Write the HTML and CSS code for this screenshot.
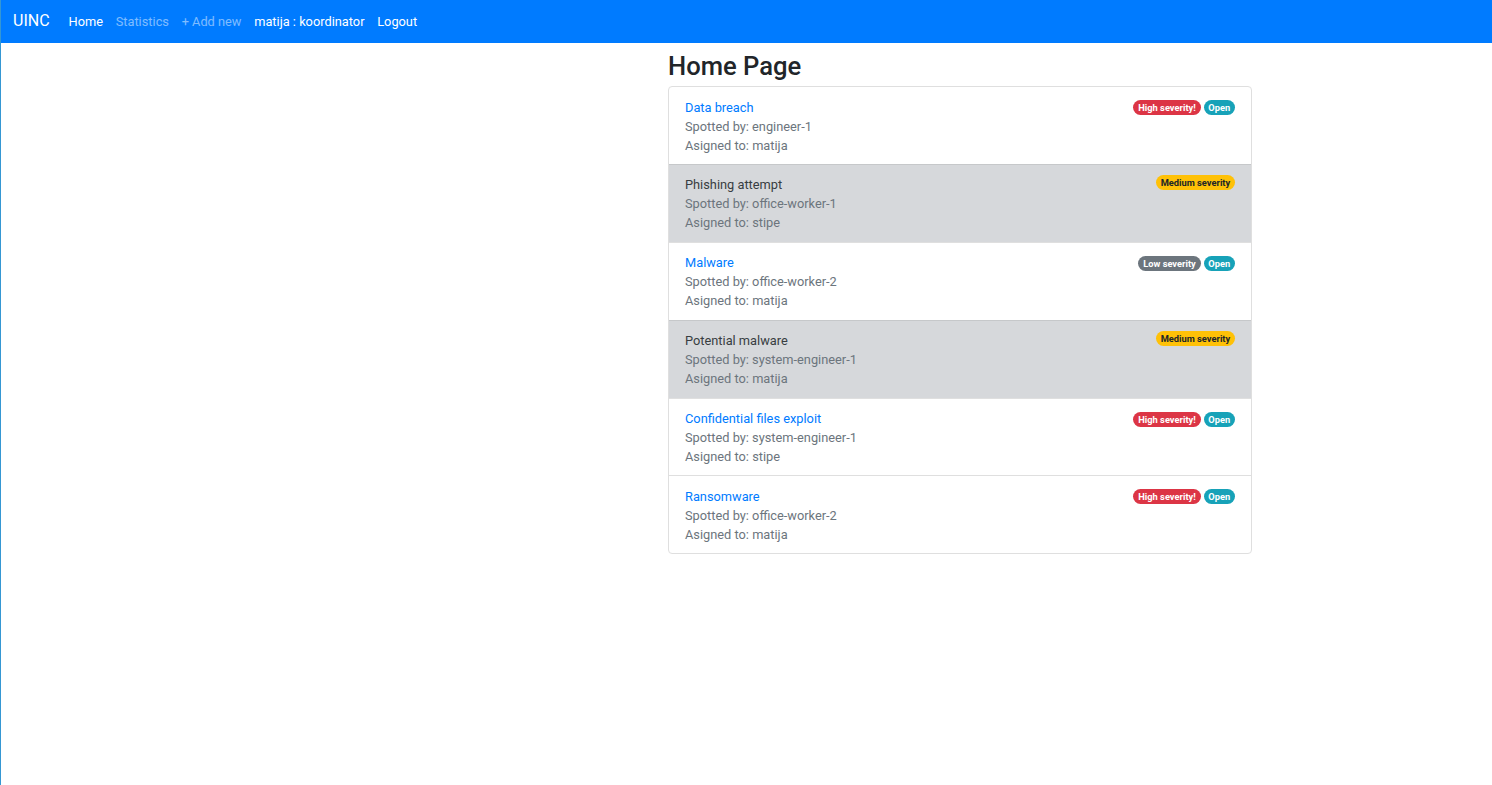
FILE: index.html
```html
<!DOCTYPE html>
<html>
<head>
<meta charset="utf-8">
<link rel="stylesheet" href="styles.css">
</head>
<body>
<nav class="navbar">
  <a class="brand">UINC</a>
  <a class="nav-link active">Home</a>
  <a class="nav-link muted">Statistics</a>
  <a class="nav-link muted">+ Add new</a>
  <a class="nav-link active">matija : koordinator</a>
  <a class="nav-link active">Logout</a>
</nav>
<main class="layout">
  <div class="spacer"></div>
  <section class="content">
    <h1 class="title">Home Page</h1>
    <ul class="list">
      <li class="item">
        <div class="info"><a class="name link">Data breach</a><div class="meta">Spotted by: engineer-1</div><div class="meta">Asigned to: matija</div></div>
        <div class="badges"><span class="badge danger">High severity!</span><span class="badge info-b">Open</span></div>
      </li>
      <li class="item grey">
        <div class="info"><span class="name">Phishing attempt</span><div class="meta">Spotted by: office-worker-1</div><div class="meta">Asigned to: stipe</div></div>
        <div class="badges"><span class="badge warning">Medium severity</span></div>
      </li>
      <li class="item">
        <div class="info"><a class="name link">Malware</a><div class="meta">Spotted by: office-worker-2</div><div class="meta">Asigned to: matija</div></div>
        <div class="badges"><span class="badge secondary">Low severity</span><span class="badge info-b">Open</span></div>
      </li>
      <li class="item grey">
        <div class="info"><span class="name">Potential malware</span><div class="meta">Spotted by: system-engineer-1</div><div class="meta">Asigned to: matija</div></div>
        <div class="badges"><span class="badge warning">Medium severity</span></div>
      </li>
      <li class="item short">
        <div class="info"><a class="name link">Confidential files exploit</a><div class="meta">Spotted by: system-engineer-1</div><div class="meta">Asigned to: stipe</div></div>
        <div class="badges"><span class="badge danger">High severity!</span><span class="badge info-b">Open</span></div>
      </li>
      <li class="item last">
        <div class="info"><a class="name link">Ransomware</a><div class="meta">Spotted by: office-worker-2</div><div class="meta">Asigned to: matija</div></div>
        <div class="badges"><span class="badge danger">High severity!</span><span class="badge info-b">Open</span></div>
      </li>
    </ul>
  </section>
</main>
</body>
</html>
```
FILE: styles.css
```css
html, body { margin: 0; padding: 0; }
body {
  font-family: Roboto, "Liberation Sans", sans-serif;
  font-size: 12.8px;
  color: #212529;
  background: #fff;
  border-left: 1px solid #3597d3;
  min-height: 785px;
  box-sizing: border-box;
}
.navbar {
  background: #007bff;
  height: 43px;
  display: flex;
  align-items: center;
  padding-left: 12px;
  box-sizing: border-box;
}
.brand {
  color: #fff;
  font-size: 16px;
  margin-right: 19px;
  padding-bottom: 2px;
}
.nav-link {
  font-size: 12.8px;
  margin-right: 12.7px;
  padding-bottom: 1px;
}
.nav-link.active { color: #fff; }
.nav-link.muted { color: rgba(255,255,255,0.5); }
.layout { display: flex; }
.spacer { width: 667px; flex: none; }
.content { width: 584px; }
.title {
  font-size: 25.6px;
  font-weight: 500;
  margin: 8px 0 4px;
  line-height: 31px;
  color: #212529;
}
.list {
  list-style: none;
  margin: 0;
  padding: 0;
  border: 1px solid #dfdfdf;
  border-radius: 4px;
  overflow: hidden;
}
.item {
  display: flex;
  justify-content: space-between;
  align-items: flex-start;
  padding: 10px 16px 10px 16px;
  height: 78px;
  box-sizing: border-box;
  border-top: 1px solid #dfdfdf;
}
.item:first-child { border-top: none; height: 77px; padding-top: 11px; }
.item.short { height: 77px; }
.item.last { padding-top: 11px; }
.item.grey { background: #d6d8db; border-top-color: #c6c8ca; }
.info { line-height: 19px; }
.name { display: block; color: #383d41; }
.name.link { color: #007bff; }
.meta { color: #6c757d; }
.badges { display: flex; gap: 3px; padding-top: 3px; }
.item:first-child .badges, .item.last .badges { padding-top: 2px; }
.grey .badges { padding-top: 0; margin-top: 0; }
.badge {
  font-size: 9.3px;
  font-weight: 700;
  line-height: 1;
  padding: 3px 4.8px;
  border-radius: 8px;
  color: #fff;
}
.danger { background: #dc3545; }
.info-b { background: #17a2b8; }
.warning { background: #ffc107; color: #212529; }
.secondary { background: #6c757d; }
```
